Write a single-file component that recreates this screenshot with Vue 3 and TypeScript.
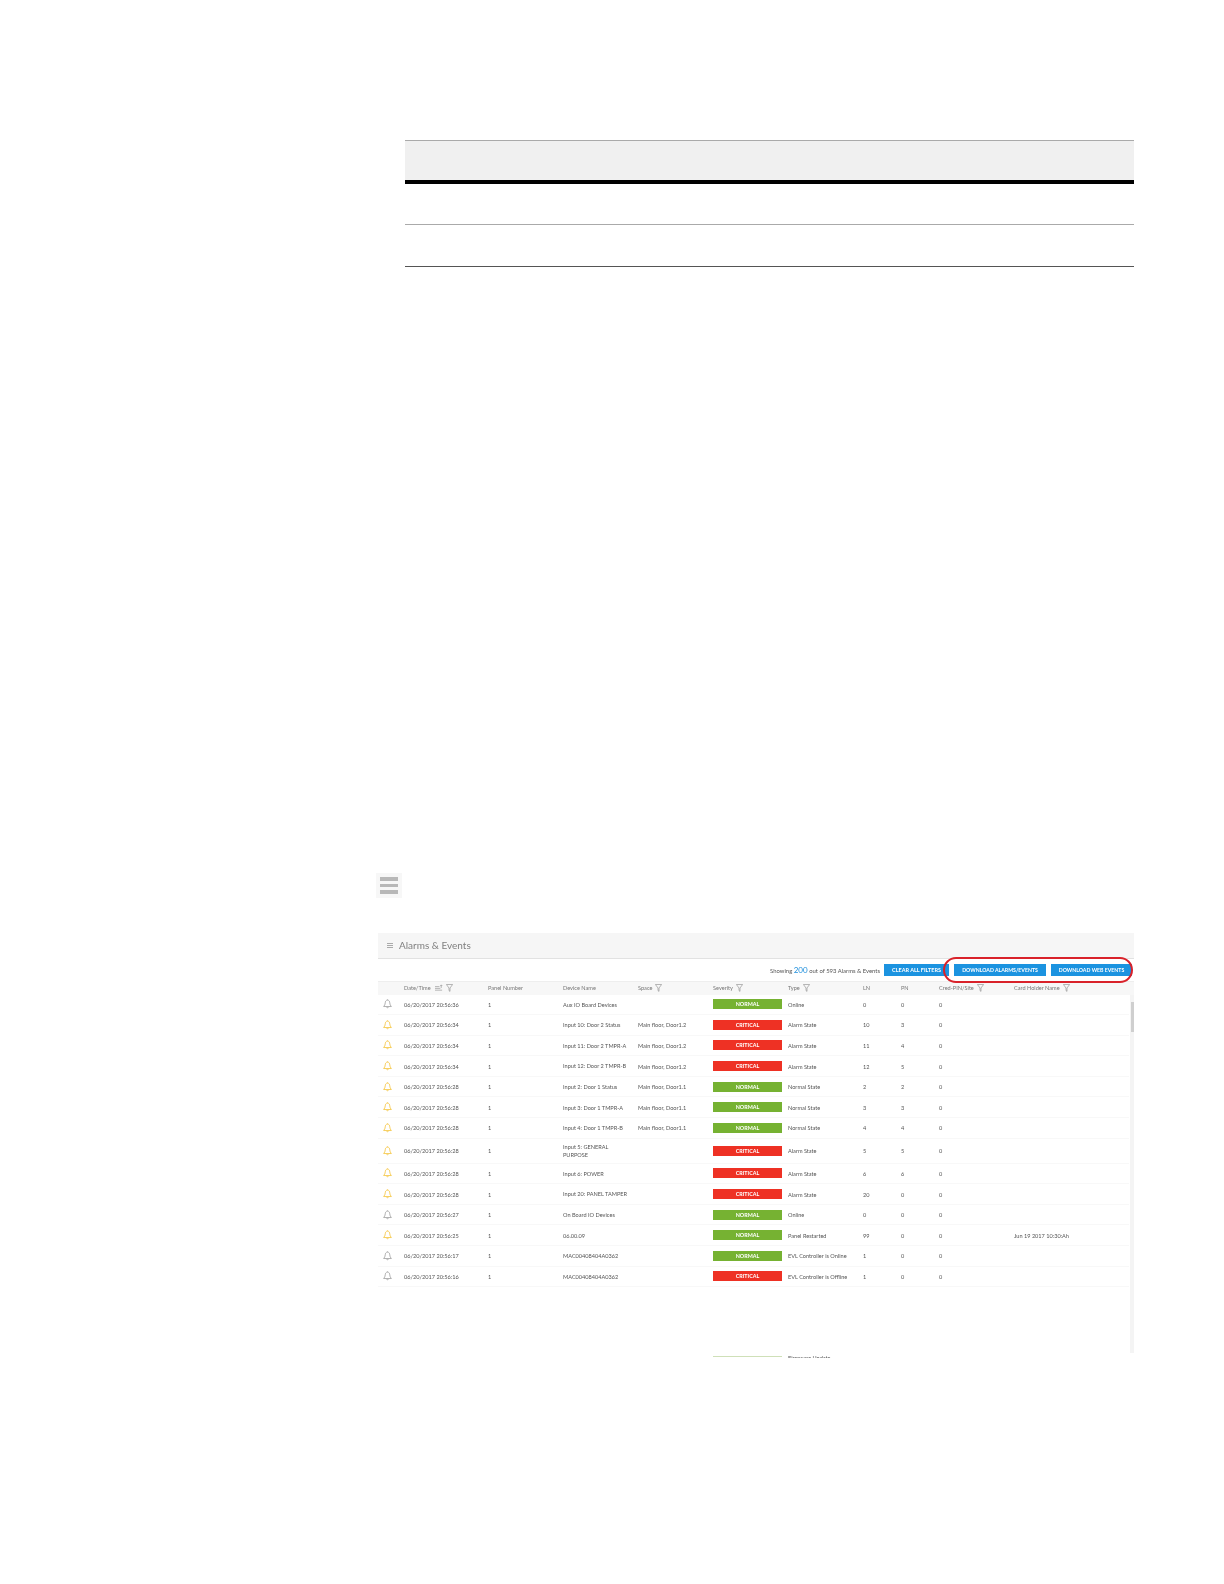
<script setup lang="ts">
interface Row {
  on: boolean
  time: string
  device: string
  device2?: string
  space: string
  sev: 'NORMAL' | 'CRITICAL'
  type: string
  ln: string
  pn: string
  card?: string
}
const rows: Row[] = [
  { on: false, time: '06/20/2017 20:56:36', device: 'Aux IO Board Devices', space: '', sev: 'NORMAL', type: 'Online', ln: '0', pn: '0' },
  { on: true, time: '06/20/2017 20:56:34', device: 'Input 10: Door 2 Status', space: 'Main floor, Door1.2', sev: 'CRITICAL', type: 'Alarm State', ln: '10', pn: '3' },
  { on: true, time: '06/20/2017 20:56:34', device: 'Input 11: Door 2 TMPR-A', space: 'Main floor, Door1.2', sev: 'CRITICAL', type: 'Alarm State', ln: '11', pn: '4' },
  { on: true, time: '06/20/2017 20:56:34', device: 'Input 12: Door 2 TMPR-B', space: 'Main floor, Door1.2', sev: 'CRITICAL', type: 'Alarm State', ln: '12', pn: '5' },
  { on: true, time: '06/20/2017 20:56:28', device: 'Input 2: Door 1 Status', space: 'Main floor, Door1.1', sev: 'NORMAL', type: 'Normal State', ln: '2', pn: '2' },
  { on: true, time: '06/20/2017 20:56:28', device: 'Input 3: Door 1 TMPR-A', space: 'Main floor, Door1.1', sev: 'NORMAL', type: 'Normal State', ln: '3', pn: '3' },
  { on: true, time: '06/20/2017 20:56:28', device: 'Input 4: Door 1 TMPR-B', space: 'Main floor, Door1.1', sev: 'NORMAL', type: 'Normal State', ln: '4', pn: '4' },
  { on: true, time: '06/20/2017 20:56:28', device: 'Input 5: GENERAL', device2: 'PURPOSE', space: '', sev: 'CRITICAL', type: 'Alarm State', ln: '5', pn: '5' },
  { on: true, time: '06/20/2017 20:56:28', device: 'Input 6: POWER', space: '', sev: 'CRITICAL', type: 'Alarm State', ln: '6', pn: '6' },
  { on: true, time: '06/20/2017 20:56:28', device: 'Input 20: PANEL TAMPER', space: '', sev: 'CRITICAL', type: 'Alarm State', ln: '20', pn: '0' },
  { on: false, time: '06/20/2017 20:56:27', device: 'On Board IO Devices', space: '', sev: 'NORMAL', type: 'Online', ln: '0', pn: '0' },
  { on: true, time: '06/20/2017 20:56:25', device: '06.00.09', space: '', sev: 'NORMAL', type: 'Panel Restarted', ln: '99', pn: '0', card: 'Jun 19 2017 10:30:Ah' },
  { on: false, time: '06/20/2017 20:56:17', device: 'MAC00408404A0362', space: '', sev: 'NORMAL', type: 'EVL Controller is Online', ln: '1', pn: '0' },
  { on: false, time: '06/20/2017 20:56:16', device: 'MAC00408404A0362', space: '', sev: 'CRITICAL', type: 'EVL Controller is Offline', ln: '1', pn: '0' },
]
</script>

<template>
  <div class="page">
    <div class="doc-table">
      <div class="doc-head"></div>
      <div class="doc-row"></div>
      <div class="doc-row last"></div>
    </div>

    <div class="menu-chip">
      <span></span><span></span><span></span>
    </div>

    <section class="shot">
      <header class="title">
        <div class="mini-menu"><i></i><i></i><i></i></div>
        <span>Alarms &amp; Events</span>
      </header>

      <div class="toolbar">
        <span class="count">Showing <b>200</b> out of 593 Alarms &amp; Events</span>
        <button class="btn clear">CLEAR ALL FILTERS</button>
        <button class="btn dl1">DOWNLOAD ALARMS/EVENTS</button>
        <button class="btn dl2">DOWNLOAD WEB EVENTS</button>
        <div class="ring"></div>
      </div>

      <div class="grid head">
        <div></div>
        <div class="hc">Date/Time
          <svg class="sort" viewBox="0 0 9 7"><path d="M0 2.5h5M0 4.5h6M0 6.5h8M7 4V.7M5.8 1.8 7 .6l1.2 1.2" fill="none" stroke="#999" stroke-width=".8"/></svg>
          <svg class="fn" viewBox="0 0 7 8"><path d="M.4.5h6.2L4 4v3.4L3 6.6V4z" fill="none" stroke="#888" stroke-width=".6"/></svg>
        </div>
        <div>Panel Number</div>
        <div>Device Name</div>
        <div class="hc">Space <svg class="fn" viewBox="0 0 7 8"><path d="M.4.5h6.2L4 4v3.4L3 6.6V4z" fill="none" stroke="#888" stroke-width=".6"/></svg></div>
        <div class="hc">Severity <svg class="fn" viewBox="0 0 7 8"><path d="M.4.5h6.2L4 4v3.4L3 6.6V4z" fill="none" stroke="#888" stroke-width=".6"/></svg></div>
        <div class="hc">Type <svg class="fn" viewBox="0 0 7 8"><path d="M.4.5h6.2L4 4v3.4L3 6.6V4z" fill="none" stroke="#888" stroke-width=".6"/></svg></div>
        <div>LN</div>
        <div>PN</div>
        <div class="hc">Cred-PIN/Site <svg class="fn" viewBox="0 0 7 8"><path d="M.4.5h6.2L4 4v3.4L3 6.6V4z" fill="none" stroke="#888" stroke-width=".6"/></svg></div>
        <div class="hc">Card Holder Name <svg class="fn" viewBox="0 0 7 8"><path d="M.4.5h6.2L4 4v3.4L3 6.6V4z" fill="none" stroke="#888" stroke-width=".6"/></svg></div>
      </div>

      <div class="body">
        <div v-for="(r, i) in rows" :key="i" class="grid row" :class="{ tall: r.device2 }">
          <div class="bell-cell">
            <svg class="bell" :class="{ on: r.on }" viewBox="0 0 10 11">
              <path d="M5 1.2C3.2 1.2 2.6 2.6 2.5 4.2 2.4 6 1.8 7.2.7 8.3h8.6C8.2 7.2 7.6 6 7.5 4.2 7.4 2.6 6.8 1.2 5 1.2zM5 .4v.8M3.9 9c.2.9 2 .9 2.2 0" fill="none" stroke="currentColor" stroke-width=".9" stroke-linejoin="round"/>
            </svg>
          </div>
          <div>{{ r.time }}</div>
          <div>1</div>
          <div class="dev">{{ r.device }}<template v-if="r.device2"><br />{{ r.device2 }}</template></div>
          <div>{{ r.space }}</div>
          <div><span class="badge" :class="r.sev === 'NORMAL' ? 'ok' : 'bad'">{{ r.sev }}</span></div>
          <div>{{ r.type }}</div>
          <div>{{ r.ln }}</div>
          <div>{{ r.pn }}</div>
          <div>0</div>
          <div>{{ r.card }}</div>
        </div>
        <div class="grid row cutoff">
          <div></div><div></div><div></div><div></div><div></div>
          <div class="sliver-cell"><span class="sliver-bar"></span></div>
          <div class="sliver-text">Firmware Update</div>
        </div>
        <div class="scroll"><div class="thumb"></div></div>
      </div>
    </section>
  </div>
</template>

<style scoped>
.page {
  width: 1224px;
  height: 1584px;
  background: #fff;
  padding-top: 140px;
  box-sizing: border-box;
  overflow: hidden;
  font-family: Lato, "Liberation Sans", sans-serif;
}
.doc-table {
  margin-left: 405px;
  width: 729px;
}
.doc-head {
  height: 39px;
  background: #f0f0f0;
  border-top: 1px solid #aaa;
  border-bottom: 4px solid #000;
}
.doc-row {
  height: 40px;
  border-bottom: 1px solid #aaa;
}
.doc-row.last {
  height: 41px;
  border-bottom-color: #555;
}
.menu-chip {
  margin: 606px 0 0 376px;
  width: 26px;
  height: 25px;
  background: #f7f7f7;
  display: flex;
  flex-direction: column;
  align-items: center;
  justify-content: center;
  gap: 3px;
}
.menu-chip span {
  width: 18px;
  height: 3.6px;
  background: #b8b8b8;
}
.shot {
  margin: 35px 0 0 378px;
  width: 756px;
  color: #555;
  font-size: 5.6px;
  filter: blur(0.35px);
}
.title {
  height: 25px;
  background: #f6f6f6;
  border-bottom: 1px solid #e2e2e2;
  display: flex;
  align-items: center;
  gap: 6px;
  padding: 0 0 1px 9px;
  box-sizing: content-box;
  height: 24px;
  font-size: 10px;
  color: #808080;
}
.mini-menu {
  display: flex;
  flex-direction: column;
  gap: 1px;
  width: 6px;
}
.mini-menu i {
  height: 1px;
  background: #aaa;
}
.toolbar {
  position: relative;
  height: 22px;
  display: flex;
  align-items: center;
  justify-content: flex-end;
  padding-right: 2px;
}
.count {
  margin-right: 4px;
  font-size: 5.9px;
}
.count b {
  font-weight: 400;
  font-size: 8px;
  color: #1f8fdc;
}
.btn {
  height: 12px;
  border: 0;
  padding: 0;
  background: #1b93e0;
  color: #fff;
  font: 700 5.2px Lato, "Liberation Sans", sans-serif;
  text-align: center;
}
.clear { width: 65px; margin-right: 5px; font-size: 5.5px; }
.dl1 { width: 92px; margin-right: 5px; }
.dl2 { width: 81px; }
.ring {
  position: absolute;
  left: 565px;
  top: -2px;
  width: 186px;
  height: 22px;
  border: 2px solid #d9222a;
  border-radius: 13px;
}
.grid {
  display: grid;
  grid-template-columns: 26px 84px 75px 75px 75px 75px 75px 38px 38px 75px 1fr;
  align-items: center;
}
.head {
  height: 13.5px;
  padding-bottom: 1.5px;
  background: #f7f7f7;
  color: #777;
  border-top: 1px solid #eee;
  box-sizing: border-box;
}
.hc {
  display: flex;
  align-items: center;
  gap: 3px;
}
.sort { width: 8px; height: 7px; margin-left: 1px; }
.fn { width: 7px; height: 8px; }
.body {
  position: relative;
  height: 363.5px;
  overflow: hidden;
}
.row {
  height: 20.6px;
  box-sizing: border-box;
  border-bottom: 1px solid #f8f8f8;
  margin-right: 5px;
}
.row.tall { height: 25px; }
.dev { line-height: 7.3px; }
.cutoff { margin-top: 64px; border: 0; align-items: start; }
.sliver-cell { padding-top: 5px; }
.sliver-bar {
  display: block;
  width: 69px;
  height: 1px;
  background: #cfe0b8;
}
.sliver-text { padding-top: 3px; }
.bell-cell {
  display: flex;
  padding-left: 5px;
}
.bell {
  width: 9px;
  height: 10px;
  color: #a0a0a0;
}
.bell.on { color: #f5c33b; }
.badge {
  display: block;
  width: 69px;
  height: 10px;
  line-height: 10px;
  text-align: center;
  color: #fff;
  font-size: 5.4px;
  font-weight: 700;
}
.ok { background: #76b232; }
.bad { background: #ee3124; }
.scroll {
  position: absolute;
  right: 0;
  top: 0;
  bottom: 5px;
  width: 4px;
  background: #f4f4f4;
}
.thumb {
  margin: 7px 0 0 1px;
  width: 2.5px;
  height: 30px;
  background: #cfcfcf;
}
</style>
